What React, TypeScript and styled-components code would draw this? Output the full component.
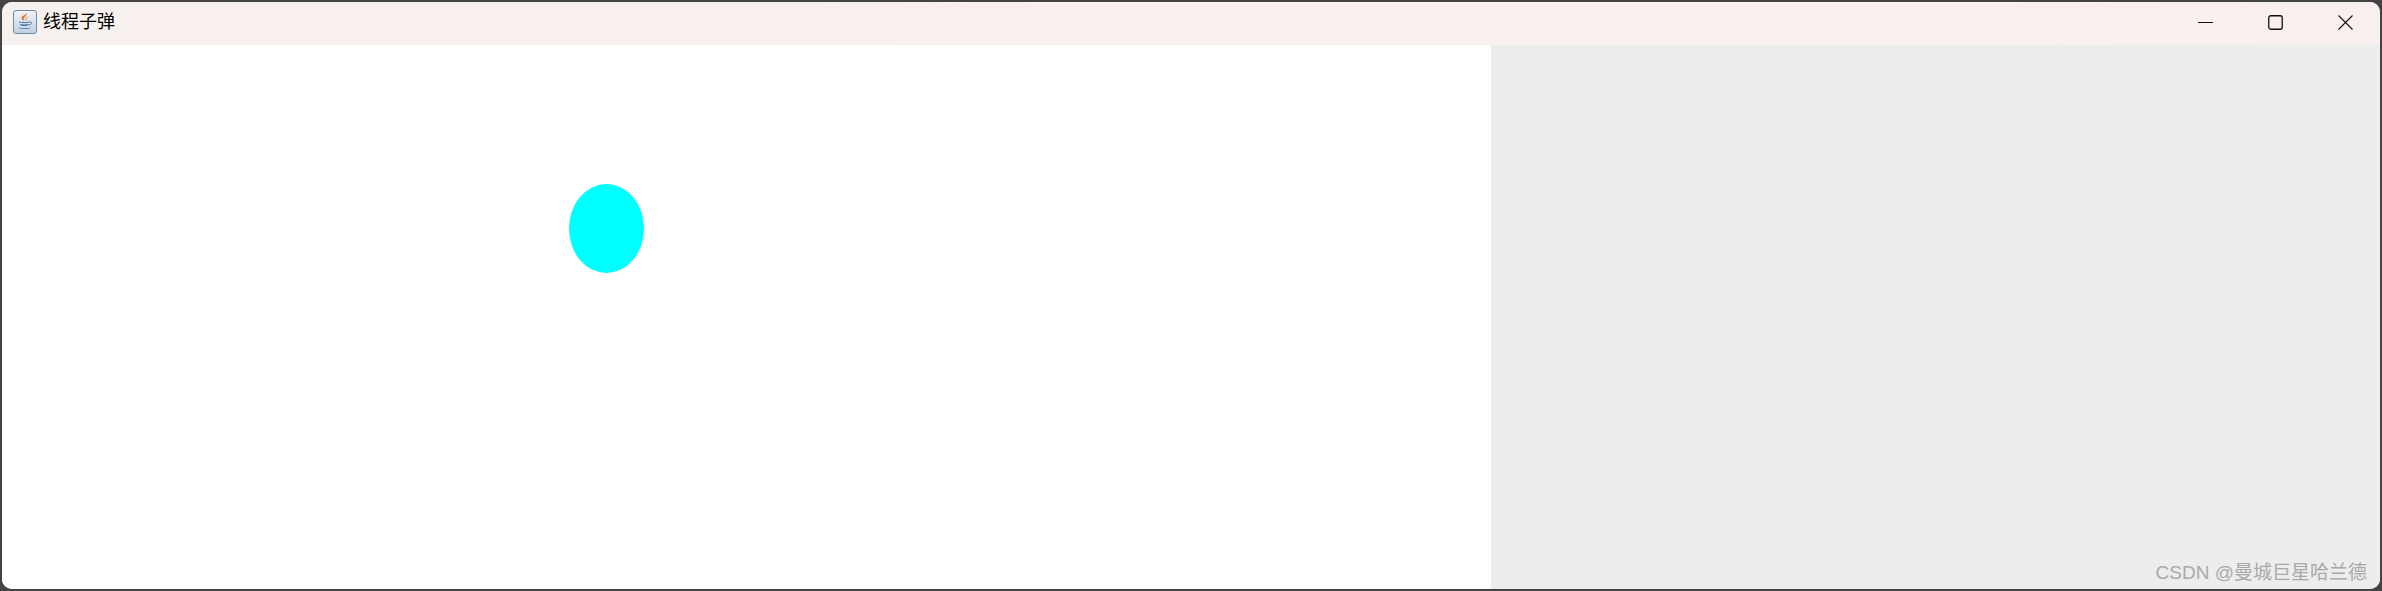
import styled, { createGlobalStyle } from 'styled-components';

const GlobalStyle = createGlobalStyle`
  html, body {
    margin: 0;
    padding: 0;
    background: #444444;
  }
  #root {
    height: 100vh;
  }
`;

const Frame = styled.div`
  position: relative;
  box-sizing: border-box;
  width: 100%;
  height: 100vh;
  display: flex;
  flex-direction: column;
  overflow: hidden;
  border: 2px solid #444444;
  border-radius: 12px;
  background: #ededed;
  font-family: "Liberation Sans", "Noto Sans CJK SC", sans-serif;
`;

const TitleBar = styled.div`
  box-sizing: border-box;
  flex: 0 0 43px;
  display: flex;
  align-items: center;
  padding-bottom: 3px;
  background: linear-gradient(90deg, #f6f0ee 0%, #f9f0ef 45%, #fbf0f0 65%, #f8f0ee 100%);
`;

const AppIcon = styled.svg`
  flex: none;
  width: 24px;
  height: 24px;
  margin: 0 6px 0 11px;
`;

const Title = styled.span`
  font-size: 18px;
  line-height: 24px;
  color: #000000;
`;

const Controls = styled.div`
  margin-left: auto;
  display: flex;
`;

const ControlButton = styled.div`
  width: 70px;
  height: 40px;
  display: flex;
  align-items: center;
  justify-content: center;
  svg {
    display: block;
  }
`;

const Content = styled.div`
  flex: 1;
  display: flex;
  min-height: 0;
`;

const Canvas = styled.div`
  position: relative;
  flex: 0 0 1489px;
  background: #ffffff;
`;

const Ball = styled.div`
  position: absolute;
  left: 567px;
  top: 139px;
  width: 75px;
  height: 89px;
  border-radius: 50%;
  background: #00ffff;
`;

const SidePanel = styled.div`
  flex: 1;
  background: #ededed;
`;

const Watermark = styled.div`
  position: absolute;
  right: 13px;
  bottom: 3px;
  font-size: 19px;
  line-height: 26px;
  white-space: nowrap;
  color: #a9a9a9;
`;

const JavaIcon = () => (
  <AppIcon viewBox="0 0 24 24">
    <defs>
      <linearGradient id="tile" x1="0" y1="0" x2="0" y2="1">
        <stop offset="0" stopColor="#f2f4f7" />
        <stop offset="1" stopColor="#bfcfe0" />
      </linearGradient>
    </defs>
    <rect x="0.5" y="0.5" width="23" height="23" rx="2.5" fill="url(#tile)" stroke="#6a8cab" />
    <path d="M14 3c.6 2.400-3.600 3.600-3.400 6 .1.900.6 1.500 1 2.200-2.200-1-3.600-2.600-2.800-4.400C9.500 5.800 12.800 5 14 3z" fill="#e4711f" />
    <path d="M15.500 6.200c-.5 1.200-2.300 1.600-2.200 3 0 .6.300 1 .5 1.500-1.300-.7-1.900-1.600-1.500-2.600.4-1 2.300-1.200 3.200-1.900z" fill="#ee9a55" />
    <path d="M6 11.600c2.800.7 8 .7 10.500 0v1c-2.500.7-7.700.7-10.500 0z" fill="#4a779f" />
    <path d="M7 14c2.400.6 6.500.6 8.800 0-.1 1-.7 1.600-1.600 1.800-1.700.4-4 .4-5.600 0-.9-.2-1.500-.8-1.600-1.800z" fill="#4a779f" />
    <path d="M16.500 12c1.500-.3 2.300.3 2 1.300-.3.9-1.400 1.300-2.500 1.400" fill="none" stroke="#4a779f" strokeWidth="0.9" />
    <path d="M5 17.200c3.200 1.400 10.300 1.400 13.500 0-1.500 2.400-12 2.400-13.500 0z" fill="#3a6a94" />
  </AppIcon>
);

export default function App() {
  return (
    <>
      <GlobalStyle />
      <Frame>
        <TitleBar>
          <JavaIcon />
          <Title>线程子弹</Title>
          <Controls>
            <ControlButton>
              <svg width="15" height="15" viewBox="0 0 15 15">
                <path d="M0 7.500h15" stroke="#111" strokeWidth="1" />
              </svg>
            </ControlButton>
            <ControlButton>
              <svg width="15" height="15" viewBox="0 0 15 15">
                <rect x="0.750" y="0.750" width="13.500" height="13.500" rx="2" fill="none" stroke="#111" strokeWidth="1.300" />
              </svg>
            </ControlButton>
            <ControlButton>
              <svg width="15" height="15" viewBox="0 0 15 15">
                <path d="M0.500 0.500l14 14M14.500 0.500l-14 14" stroke="#111" strokeWidth="1.100" />
              </svg>
            </ControlButton>
          </Controls>
        </TitleBar>
        <Content>
          <Canvas>
            <Ball />
          </Canvas>
          <SidePanel />
        </Content>
        <Watermark>CSDN @曼城巨星哈兰德</Watermark>
      </Frame>
    </>
  );
}
